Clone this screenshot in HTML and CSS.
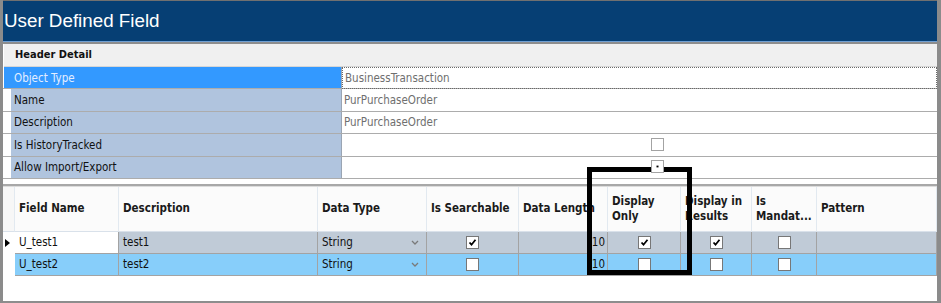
FILE: index.html
```html
<!DOCTYPE html>
<html lang="en">
<head>
    <meta charset="UTF-8">
    <title>User Defined Field</title>
    <link rel="stylesheet" href="styles.css">
</head>
<body>
    <div class="window">
        <div class="titlebar">User Defined Field</div>
        <div class="title-sep"></div>

        <div class="detail">
            <div class="cat">Header Detail</div>
            <div class="prop selected">
                <div class="gutter"></div>
                <div class="label">Object Type</div>
                <div class="value focus">BusinessTransaction</div>
            </div>
            <div class="prop">
                <div class="gutter"></div>
                <div class="label">Name</div>
                <div class="value">PurPurchaseOrder</div>
            </div>
            <div class="prop">
                <div class="gutter"></div>
                <div class="label">Description</div>
                <div class="value">PurPurchaseOrder</div>
            </div>
            <div class="prop">
                <div class="gutter"></div>
                <div class="label">Is HistoryTracked</div>
                <div class="value check"><span class="box light"></span></div>
            </div>
            <div class="prop">
                <div class="gutter"></div>
                <div class="label">Allow Import/Export</div>
                <div class="value check"><span class="box light raised"><svg viewBox="0 0 11 11"><path d="M4.5 5.5h2" /></svg></span></div>
            </div>
        </div>

        <div class="split"></div>

        <div class="grid">
            <div class="hcell rowhead"></div>
            <div class="hcell">Field Name</div>
            <div class="hcell">Description</div>
            <div class="hcell">Data Type</div>
            <div class="hcell">Is Searchable</div>
            <div class="hcell">Data Length</div>
            <div class="hcell">Display<br>Only</div>
            <div class="hcell">Display in<br>Results</div>
            <div class="hcell">Is<br>Mandat...</div>
            <div class="hcell">Pattern</div>

            <div class="cell rowhead"><span class="arrow"></span></div>
            <div class="cell r1 editing">U_test1</div>
            <div class="cell r1">test1</div>
            <div class="cell r1 combo">String <svg class="chev" viewBox="0 0 8 5"><path d="M1 1l3 3 3-3" /></svg></div>
            <div class="cell r1 center"><span class="box on"><svg viewBox="0 0 11 11"><path d="M2.5 5.5l2 2.2 4-5" /></svg></span></div>
            <div class="cell r1 num">10</div>
            <div class="cell r1 center"><span class="box on"><svg viewBox="0 0 11 11"><path d="M2.5 5.5l2 2.2 4-5" /></svg></span></div>
            <div class="cell r1 center"><span class="box on"><svg viewBox="0 0 11 11"><path d="M2.5 5.5l2 2.2 4-5" /></svg></span></div>
            <div class="cell r1 center"><span class="box"></span></div>
            <div class="cell r1"></div>

            <div class="cell rowhead"></div>
            <div class="cell r2">U_test2</div>
            <div class="cell r2">test2</div>
            <div class="cell r2 combo">String <svg class="chev" viewBox="0 0 8 5"><path d="M1 1l3 3 3-3" /></svg></div>
            <div class="cell r2 center"><span class="box"></span></div>
            <div class="cell r2 num">10</div>
            <div class="cell r2 center"><span class="box"></span></div>
            <div class="cell r2 center"><span class="box"></span></div>
            <div class="cell r2 center"><span class="box"></span></div>
            <div class="cell r2"></div>
        </div>

        <!-- annotation drawn over the screenshot -->
        <div class="callout"></div>
    </div>
</body>
</html>
```

FILE: styles.css
```css
body {
    margin: 0;
    width: 941px;
    height: 303px;
    overflow: hidden;
    background: #8b8b8b;
    font-family: "DejaVu Sans Condensed", "DejaVu Sans", sans-serif;
    font-size: 11.5px;
    color: #111;
}
.window {
    position: relative;
    margin-left: 3px;
    width: 934px;
    height: 303px;
    box-sizing: border-box;
    background: #fff;
    border-top: 1px solid #707070;
    border-bottom: 2px solid #8d8d8d;
}
.titlebar {
    height: 40px;
    line-height: 40px;
    padding-left: 1px;
    background: #063f74;
    color: #fff;
    font-family: "Liberation Sans", Arial, sans-serif;
    font-size: 18.8px;
    border-bottom: 1px solid #6f9fd3;
}
.title-sep {
    height: 2px;
    background: #8d8d8d;
}

/* property grid */
.cat {
    height: 22px;
    line-height: 22px;
    margin-left: 1px;
    padding-left: 11px;
    background: #f0f0f0;
    font-weight: bold;
    font-size: 11px;
    border-bottom: 1px solid #d6d6d6;
}
.prop {
    display: flex;
    height: 22.4px;
    box-sizing: border-box;
    border-bottom: 1px solid #acacac;
}
.gutter {
    width: 8px;
}
.label {
    width: 327px;
    padding-left: 3px;
    background: #b0c4de;
    display: flex;
    align-items: center;
    border-right: 1px solid #9aa5b3;
}
.value {
    flex: 1;
    display: flex;
    align-items: center;
    padding-left: 2px;
    color: #6f6f6f;
}
.prop.selected .gutter {
    margin-left: 1px;
    width: 7px;
    background: #3399ff;
}
.prop.selected .label {
    background: #3399ff;
    color: #e4eeff;
}
.value.focus {
    border: 1px dotted #6a6a6a;
    margin-bottom: -1px;
}
.value.check {
    padding-left: 309px;
}

.split {
    height: 2px;
    margin-top: 5px;
    background: #a8a8a8;
    border-bottom: 1px solid #dcdcdc;
}

/* data grid */
.grid {
    display: grid;
    grid-template-columns: 12px 104px 199px 109px 92px 89px 73px 71px 65px 1fr;
    grid-template-rows: 45px 22px 22px;
}
.hcell {
    background: #fbfbfb;
    border-right: 1px solid #e2e9f0;
    border-bottom: 1px solid #d9e1ea;
    padding-left: 4px;
    display: flex;
    align-items: center;
    font-weight: bold;
    font-size: 11.5px;
    line-height: 15px;
    color: #1a1a1a;
}
.hcell.rowhead {
    padding-left: 0;
    background: #f7f7f7;
}
.cell {
    padding-left: 4px;
    display: flex;
    align-items: center;
    border-right: 1px solid #a3a3a3;
    border-bottom: 1px solid #a3a3a3;
    white-space: nowrap;
}
.cell.rowhead {
    padding-left: 2px;
    background: #fff;
    border-right: none;
    border-bottom: none;
}
.arrow {
    width: 0;
    height: 0;
    border-top: 4px solid transparent;
    border-bottom: 4px solid transparent;
    border-left: 5px solid #000;
}
.r1 {
    background: #c0cbd7;
}
.r2 {
    background: #87cefa;
}
.r1.editing {
    background: #fff;
}
.combo {
    justify-content: space-between;
    padding-right: 7px;
}
.chev {
    width: 8px;
    height: 5px;
    fill: none;
    stroke: #7a7a7a;
    stroke-width: 1.3;
}
.num {
    justify-content: flex-end;
    padding-right: 2px;
}
.center {
    justify-content: center;
    padding-left: 0;
}
.box {
    width: 11px;
    height: 11px;
    border: 1px solid #777;
    background: #fff;
    display: inline-block;
}
.box svg {
    display: block;
    width: 11px;
    height: 11px;
    fill: none;
    stroke: #000;
    stroke-width: 1.8;
}
.box.light {
    border-color: #a3a3a3;
}
.box.raised {
    position: relative;
    z-index: 2;
    margin-top: -2px;
}

.callout {
    position: absolute;
    left: 584px;
    top: 166px;
    width: 105px;
    height: 108px;
    box-sizing: border-box;
    border: 5px solid #000;
    z-index: 1;
}
```
